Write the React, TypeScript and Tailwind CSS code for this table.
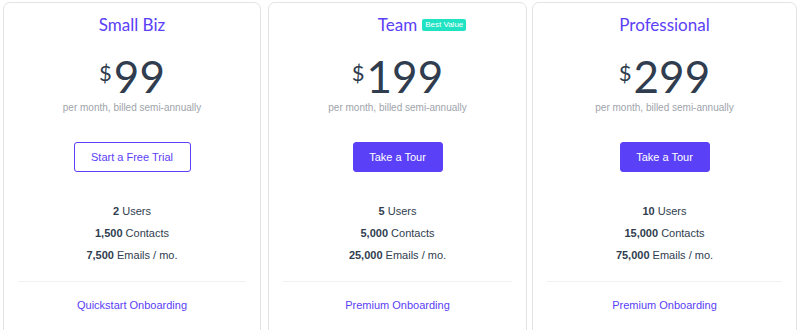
import React from "react";

const PURPLE = "text-[#5a40f6]";

type Plan = {
  name: string;
  price: string;
  badge?: string;
  cta: string;
  outline?: boolean;
  users: string;
  contacts: string;
  emails: string;
  onboarding: string;
  width: string;
  ml: string;
};

const plans: Plan[] = [
  { name: "Small Biz", price: "99", cta: "Start a Free Trial", outline: true, users: "2", contacts: "1,500", emails: "7,500", onboarding: "Quickstart Onboarding", width: "w-[258px]", ml: "ml-0" },
  { name: "Team", price: "199", badge: "Best Value", cta: "Take a Tour", users: "5", contacts: "5,000", emails: "25,000", onboarding: "Premium Onboarding", width: "w-[259px]", ml: "ml-[7px]" },
  { name: "Professional", price: "299", cta: "Take a Tour", users: "10", contacts: "15,000", emails: "75,000", onboarding: "Premium Onboarding", width: "w-[265px]", ml: "ml-[5px]" },
];

function Card({ p }: { p: Plan }) {
  return (
    <div className={`${p.width} ${p.ml} shrink-0 h-[360px] bg-white border border-[#e3e3e3] rounded-[7px] flex flex-col items-center`}>
      <div className="mt-[10px] h-[24px] flex items-center justify-center">
        <span className={`relative text-[17px] leading-[24px] ${PURPLE} font-['Lato',sans-serif]`}>
          {p.name}
          {p.badge && (
            <span className="absolute left-full top-[6px] ml-[5px] h-[12px] px-[3px] rounded-[2px] bg-[#1fe3c3] text-white text-[8px] leading-[12px] whitespace-nowrap font-['Liberation_Sans',Arial,sans-serif]">
              {p.badge}
            </span>
          )}
        </span>
      </div>
      <div className="mt-[17px] flex items-start justify-center text-[#2f3d4f] font-['Lato',sans-serif]">
        <span className="block mt-[8px] mr-[2px] text-[22px] leading-[22px]">$</span>
        <span className="block text-[44px] leading-[44px]">{p.price}</span>
      </div>
      <div className="mt-[3px] text-[10px] leading-[14px] text-[#a0a4ab] font-['Liberation_Sans',Arial,sans-serif]">
        per month, billed semi-annually
      </div>
      {p.outline ? (
        <div className="mt-[27px] w-[117px] h-[30px] rounded-[3px] border border-[#5a40f6] bg-white flex items-center justify-center text-[11px] text-[#5a40f6] font-['Liberation_Sans',Arial,sans-serif]">
          {p.cta}
        </div>
      ) : (
        <div className="mt-[27px] w-[90px] h-[30px] rounded-[3px] border border-[#5a40f6] bg-[#5a40f6] flex items-center justify-center text-[11px] text-white font-['Liberation_Sans',Arial,sans-serif]">
          {p.cta}
        </div>
      )}
      <div className="mt-[28px] flex flex-col items-center text-[11px] leading-[22px] text-[#2f3d4f] font-['Liberation_Sans',Arial,sans-serif]">
        <div><b>{p.users}</b> Users</div>
        <div><b>{p.contacts}</b> Contacts</div>
        <div><b>{p.emails}</b> Emails / mo.</div>
      </div>
      <div className="mt-[15px] self-stretch mx-[14px] border-t border-[#f1f1f1]" />
      <div className={`mt-[12px] text-[11px] leading-[22px] ${PURPLE} font-['Liberation_Sans',Arial,sans-serif]`}>
        {p.onboarding}
      </div>
    </div>
  );
}

export default function App() {
  return (
    <div className="w-[800px] h-[330px] overflow-hidden bg-white flex items-start pt-[2px] pl-[3px]">
      {plans.map((p) => (
        <Card key={p.name} p={p} />
      ))}
    </div>
  );
}
